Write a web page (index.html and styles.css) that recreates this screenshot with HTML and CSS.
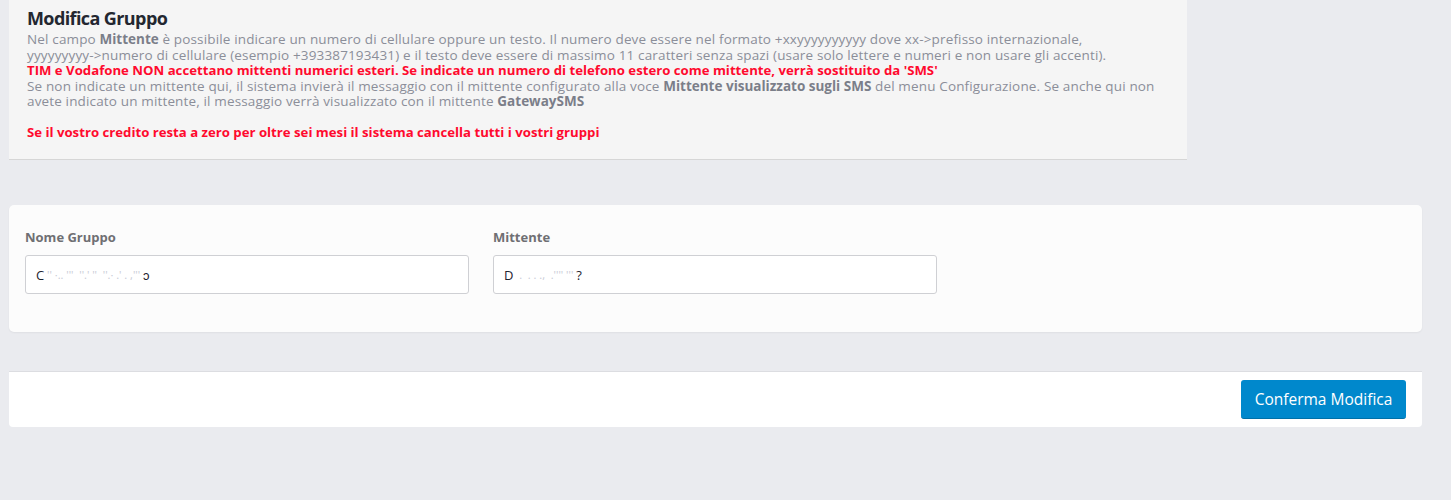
FILE: index.html
```html
<!DOCTYPE html>
<html lang="it">
<head>
<meta charset="utf-8">
<title>Modifica Gruppo</title>
<link rel="stylesheet" href="styles.css">
</head>
<body>
<main class="page">
  <section class="intro">
    <h1 class="intro-title">Modifica Gruppo</h1>
    <div class="intro-text">
      <span class="line">Nel campo <b>Mittente</b> è possibile indicare un numero di cellulare oppure un testo. Il numero deve essere nel formato +xxyyyyyyyyyy dove xx-&gt;prefisso internazionale,</span>
      <span class="line">yyyyyyyyy-&gt;numero di cellulare (esempio +393387193431) e il testo deve essere di massimo 11 caratteri senza spazi (usare solo lettere e numeri e non usare gli accenti).</span>
      <span class="line warn">TIM e Vodafone NON accettano mittenti numerici esteri. Se indicate un numero di telefono estero come mittente, verrà sostituito da 'SMS'</span>
      <span class="line">Se non indicate un mittente qui, il sistema invierà il messaggio con il mittente configurato alla voce <b>Mittente visualizzato sugli SMS</b> del menu Configurazione. Se anche qui non</span>
      <span class="line">avete indicato un mittente, il messaggio verrà visualizzato con il mittente <b>GatewaySMS</b></span>
      <span class="line">&nbsp;</span>
      <span class="line warn">Se il vostro credito resta a zero per oltre sei mesi il sistema cancella tutti i vostri gruppi</span>
    </div>
  </section>

  <section class="form-card">
    <div class="form-row">
      <div class="form-group">
        <label class="form-label">Nome Gruppo</label>
        <div class="form-input"><span class="ink">C</span><span class="blur"> '' ·.. '''  ''.' ''  ''.· .' . ,''' </span><span class="ink">ɔ</span></div>
      </div>
      <div class="form-group">
        <label class="form-label">Mittente</label>
        <div class="form-input"><span class="ink">D</span><span class="blur">  .  . . .,  .'''' ''' </span><span class="ink">?</span></div>
      </div>
      <div class="form-group"></div>
    </div>
  </section>

  <section class="footer-card">
    <button class="btn-primary" type="button">Conferma Modifica</button>
  </section>
</main>
</body>
</html>
```

FILE: styles.css
```css
html, body {
  margin: 0;
  padding: 0;
}

body {
  background: #eaebef;
  font-family: "Open Sans", "Liberation Sans", sans-serif;
  color: #8a8c96;
  height: 500px;
  overflow: hidden;
}

.page {
  padding-left: 9px;
}

.intro {
  width: 1178px;
  height: 159px;
  box-sizing: content-box;
  background: #f5f5f5;
  border-bottom: 1px solid #d6d6d6;
  padding: 0;
}

.intro-title {
  margin: 0;
  padding: 7px 18px 0;
  font-size: 18px;
  line-height: 22px;
  font-weight: 700;
  color: #232730;
  letter-spacing: -0.6px;
}

.intro-text {
  padding: 3px 18px 0;
  font-size: 13.5px;
  line-height: 15.5px;
  letter-spacing: 0.15px;
  color: #8b8e99;
}

.intro-text .line {
  display: block;
  white-space: nowrap;
}

.intro-text b {
  font-weight: 700;
  color: #7b7e89;
  letter-spacing: 0;
}

.intro-text .warn {
  color: #ff0a2e;
  font-weight: 700;
  font-size: 13.2px;
  letter-spacing: 0;
}

.form-card {
  margin-top: 45px;
  width: 1413px;
  height: 127px;
  box-sizing: border-box;
  background: #fcfcfc;
  border-radius: 5px;
  box-shadow: 0 1px 2px rgba(0, 0, 0, 0.05);
  padding: 22px 16px 0;
}

.form-row {
  display: grid;
  grid-template-columns: 444px 444px 1fr;
  column-gap: 24px;
}

.form-group {
  display: flex;
  flex-direction: column;
}

.form-label {
  font-size: 13px;
  line-height: 20px;
  font-weight: 700;
  color: #6f6f73;
  margin-bottom: 8px;
}

.form-input {
  height: 39px;
  box-sizing: border-box;
  border: 1px solid #cfd0d4;
  border-radius: 3px;
  background: #ffffff;
  padding: 0 10px;
  display: flex;
  align-items: center;
  font-size: 13px;
  color: #222;
  white-space: pre;
}

.form-input .ink {
  color: #1f2430;
}

.form-input .blur {
  color: #c8cbd6;
  font-size: 11px;
}

.footer-card {
  margin-top: 39px;
  width: 1413px;
  height: 56px;
  box-sizing: border-box;
  background: #ffffff;
  border-top: 1px solid #dcdde1;
  border-radius: 0 0 4px 4px;
  padding: 8px 16px 8px;
  display: flex;
  justify-content: flex-end;
  align-items: flex-start;
}

.btn-primary {
  height: 39px;
  width: 165px;
  background: #0088cc;
  border: none;
  border-bottom: 1px solid #0070a8;
  border-radius: 3px;
  color: #ffffff;
  font-family: "Open Sans", "Liberation Sans", sans-serif;
  font-size: 15.5px;
  padding: 0;
  cursor: pointer;
}
```
